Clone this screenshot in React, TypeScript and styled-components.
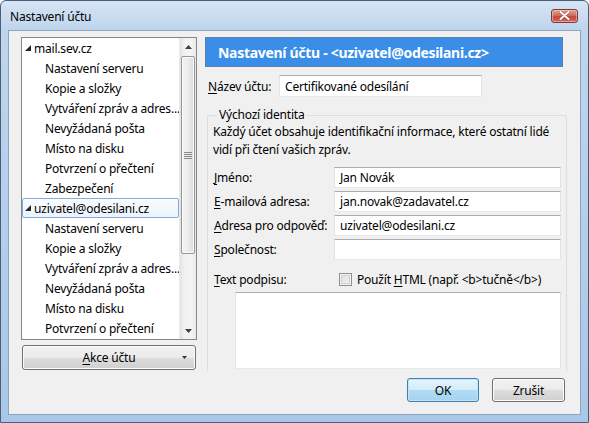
import React from 'react';
import styled, { createGlobalStyle } from 'styled-components';

const Global = createGlobalStyle`
  html, body { margin: 0; padding: 0; background: #ffffff; }
  body {
    font-family: "Noto Sans", "Open Sans", sans-serif;
    font-size: 12px;
    color: #000;
  }
  * { box-sizing: border-box; }
`;

const Window = styled.div`
  width: 589px;
  height: 423px;
  border: 1px solid #4b5e77;
  border-radius: 6px 6px 0 0;
  background: linear-gradient(180deg, #d6e5f5 0px, #bfd5ed 28px, #b3cdea 60%, #a9c7e7 100%);
  padding: 0 7px 7px;
  display: flex;
  flex-direction: column;
`;

const TitleBar = styled.div`
  height: 29px;
  display: flex;
  align-items: center;
  padding: 2px 3px 0 2px;
`;

const Title = styled.div`
  flex: 1;
  font-size: 12px;
  letter-spacing: -0.2px;
  color: #000;
`;

const CloseBtn = styled.div`
  width: 27px;
  height: 14px;
  border-radius: 3px;
  border: 1px solid #7a3b35;
  background: linear-gradient(180deg, #e4a190 0%, #d0705f 45%, #c5473a 55%, #d36b58 100%);
  box-shadow: inset 0 0 0 1px rgba(255, 220, 210, 0.5);
  display: flex;
  align-items: center;
  justify-content: center;
  margin-top: -2px;
`;

const Client = styled.div`
  flex: 1;
  background: #f0f0f0;
  border: 1px solid #8ea4be;
  padding: 6px 12px 12px;
  display: flex;
  flex-direction: column;
`;

const Main = styled.div`
  height: 335px;
  display: flex;
  gap: 8px;
`;

const LeftCol = styled.div`
  width: 176px;
  display: flex;
  flex-direction: column;
  gap: 5px;
`;

const Tree = styled.div`
  height: 303px;
  border: 1px solid #828790;
  background: #fff;
  display: flex;
`;

const TreeList = styled.div`
  flex: 1;
  overflow: hidden;
`;

const TreeRow = styled.div<{ $level: number; $selected?: boolean }>`
  height: 20px;
  display: flex;
  align-items: center;
  gap: 3px;
  padding-left: ${(p) => (p.$level === 0 ? 2 : 22)}px;
  white-space: nowrap;
  letter-spacing: -0.2px;
  border: 1px solid ${(p) => (p.$selected ? '#84acdd' : 'transparent')};
  border-radius: 2px;
  background: ${(p) => (p.$selected ? 'linear-gradient(180deg, #fafcfe 0%, #ebf3fd 100%)' : 'transparent')};
`;

const Scrollbar = styled.div`
  width: 17px;
  display: flex;
  flex-direction: column;
  background: linear-gradient(90deg, #e3e3e3 0%, #f2f2f2 30%, #f4f4f4 70%, #e8e8e8 100%);
  border-left: 1px solid #e9e9e9;
`;

const ScrollArrow = styled.div`
  height: 17px;
  display: flex;
  align-items: center;
  justify-content: center;
`;

const Track = styled.div`
  flex: 1;
  padding: 1px 1px 0;
`;

const Thumb = styled.div`
  height: 198px;
  border: 1px solid #979797;
  border-radius: 2px;
  background: linear-gradient(90deg, #f4f4f4 0%, #ececec 50%, #dcdcdc 100%);
  box-shadow: inset 0 0 0 1px #fbfbfb;
  display: flex;
  align-items: center;
  justify-content: center;
`;

const DropButton = styled.div`
  height: 25px;
  margin: 0 1px;
  border: 1px solid #707070;
  border-radius: 3px;
  background: linear-gradient(180deg, #f2f2f2 0%, #ebebeb 50%, #dddddd 51%, #cfcfcf 100%);
  box-shadow: inset 0 0 0 1px #fcfcfc;
  display: flex;
  align-items: center;
  justify-content: center;
  position: relative;
  letter-spacing: -0.2px;
`;

const DropArrow = styled.span`
  position: absolute;
  right: 8px;
  top: 10px;
  display: flex;
`;

const RightCol = styled.div`
  width: 362px;
  display: flex;
  flex-direction: column;
`;

const Header = styled.div`
  width: 358px;
  height: 30px;
  background: #3a8ee8;
  border: 1px solid #5e84ad;
  color: #fff;
  font-weight: 700;
  font-size: 14px;
  letter-spacing: -0.3px;
  display: flex;
  align-items: center;
  padding-left: 12px;
  white-space: nowrap;
`;

const NameRow = styled.div`
  margin-top: 8px;
  height: 22px;
  display: flex;
  align-items: center;
  padding-left: 3px;
`;

const NameLabel = styled.label`
  width: 71px;
  letter-spacing: -0.2px;
`;

const TextBox = styled.div<{ $w: number; $h?: number }>`
  width: ${(p) => p.$w}px;
  height: ${(p) => p.$h ?? 21}px;
  background: #fff;
  border: 1px solid #e2e3ea;
  border-top-color: #abadb3;
  border-bottom-color: #e3e9ef;
  padding-left: 5px;
  display: flex;
  align-items: center;
  letter-spacing: -0.2px;
  white-space: nowrap;
`;

const Group = styled.fieldset`
  margin: 10px 0 0 2px;
  width: 360px;
  border: 1px solid #d5dfe5;
  border-bottom: none;
  border-radius: 3px 3px 0 0;
  padding: 0 5px 2px 6px;
  min-width: 0;
`;

const Legend = styled.legend`
  padding: 0 2px;
  margin-left: 3px;
  line-height: 16px;
  letter-spacing: -0.2px;
`;

const Desc = styled.div`
  line-height: 18px;
  margin-left: -1px;
  letter-spacing: -0.2px;
  white-space: nowrap;
`;

const Fields = styled.div`
  margin-top: 8px;
  display: grid;
  grid-template-columns: 120px 227px;
  grid-auto-rows: 21px;
  row-gap: 3px;
  align-items: center;
`;

const FieldLabel = styled.label`
  letter-spacing: -0.2px;
  white-space: nowrap;
`;

const SigRow = styled.div`
  margin-top: 9px;
  height: 20px;
  display: flex;
  align-items: center;
`;

const SigLabel = styled.label`
  width: 125px;
  letter-spacing: -0.2px;
`;

const CheckBox = styled.div`
  width: 13px;
  height: 13px;
  border: 1px solid #8e8f8f;
  background: linear-gradient(135deg, #dcdcdc 0%, #f5f5f5 100%);
  box-shadow: inset 0 0 0 1px #f4f4f4, inset 0 0 0 2px #d2d2d2;
  margin-right: 5px;
`;

const CheckText = styled.span`
  letter-spacing: -0.2px;
  white-space: nowrap;
`;

const SigArea = styled.div`
  margin: 3px 0 0 21px;
  width: 326px;
  height: 77px;
  background: #fff;
  border: 1px solid #e2e3ea;
  border-top-color: #abadb3;
  border-bottom-color: #e3e9ef;
`;

const Footer = styled.div`
  margin-top: 6px;
  height: 24px;
  display: flex;
  justify-content: flex-end;
  gap: 13px;
  padding-right: 3px;
`;

const Button = styled.div<{ $default?: boolean }>`
  width: ${(p) => (p.$default ? 72 : 73)}px;
  height: 24px;
  border-radius: 3px;
  border: 1px solid ${(p) => (p.$default ? '#3c7fb1' : '#707070')};
  background: ${(p) =>
    p.$default
      ? 'linear-gradient(180deg, #e5f4fc 0%, #d3ecfa 50%, #b2dcf5 51%, #a3d2f0 100%)'
      : 'linear-gradient(180deg, #f2f2f2 0%, #ebebeb 50%, #dddddd 51%, #cfcfcf 100%)'};
  box-shadow: inset 0 0 0 1px ${(p) => (p.$default ? '#c4e5f6' : '#fcfcfc')};
  display: flex;
  align-items: center;
  justify-content: center;
  letter-spacing: -0.2px;
`;

const Key = styled.u`
  text-decoration: underline;
  text-underline-offset: 2px;
`;

const Expander = () => (
  <svg width="6" height="6" viewBox="0 0 6 6">
    <polygon points="6,0 6,6 0,6" fill="#262626" />
  </svg>
);

const ArrowUp = () => (
  <svg width="7" height="4" viewBox="0 0 7 4">
    <polygon points="3.5,0 7,4 0,4" fill="#404040" />
  </svg>
);

const ArrowDown = () => (
  <svg width="7" height="4" viewBox="0 0 7 4">
    <polygon points="0,0 7,0 3.5,4" fill="#404040" />
  </svg>
);

const Grip = () => (
  <svg width="8" height="7" viewBox="0 0 8 7">
    <rect x="0" y="0" width="8" height="1" fill="#8a8a8a" />
    <rect x="0" y="2" width="8" height="1" fill="#8a8a8a" />
    <rect x="0" y="4" width="8" height="1" fill="#8a8a8a" />
    <rect x="0" y="6" width="8" height="1" fill="#8a8a8a" />
  </svg>
);

const CloseX = () => (
  <svg width="11" height="9" viewBox="0 0 11 9">
    <path d="M1.5 1 L9.5 8 M9.5 1 L1.5 8" stroke="#5a2a25" strokeWidth="3" strokeLinecap="round" opacity="0.5" />
    <path d="M1.5 1 L9.5 8 M9.5 1 L1.5 8" stroke="#ffffff" strokeWidth="2" strokeLinecap="round" />
  </svg>
);

const subItems = [
  'Nastavení serveru',
  'Kopie a složky',
  'Vytváření zpráv a adres...',
  'Nevyžádaná pošta',
  'Místo na disku',
  'Potvrzení o přečtení',
  'Zabezpečení',
];

const accounts = [
  { name: 'mail.sev.cz', selected: false },
  { name: 'uzivatel@odesilani.cz', selected: true },
];

const identity = [
  { label: <><Key>J</Key>méno:</>, value: 'Jan Novák' },
  { label: <><Key>E</Key>-mailová adresa:</>, value: 'jan.novak@zadavatel.cz' },
  { label: <><Key>A</Key>dresa pro odpověď:</>, value: 'uzivatel@odesilani.cz' },
  { label: <><Key>S</Key>polečnost:</>, value: '' },
];

export default function App() {
  return (
    <>
      <Global />
      <Window>
        <TitleBar>
          <Title>Nastavení účtu</Title>
          <CloseBtn>
            <CloseX />
          </CloseBtn>
        </TitleBar>
        <Client>
          <Main>
            <LeftCol>
              <Tree>
                <TreeList>
                  {accounts.map((a) => (
                    <React.Fragment key={a.name}>
                      <TreeRow $level={0} $selected={a.selected}>
                        <Expander />
                        <span>{a.name}</span>
                      </TreeRow>
                      {subItems.map((s) => (
                        <TreeRow key={a.name + s} $level={1}>
                          {s}
                        </TreeRow>
                      ))}
                    </React.Fragment>
                  ))}
                </TreeList>
                <Scrollbar>
                  <ScrollArrow>
                    <ArrowUp />
                  </ScrollArrow>
                  <Track>
                    <Thumb>
                      <Grip />
                    </Thumb>
                  </Track>
                  <ScrollArrow>
                    <ArrowDown />
                  </ScrollArrow>
                </Scrollbar>
              </Tree>
              <DropButton>
                <span>
                  <Key>A</Key>kce účtu
                </span>
                <DropArrow>
                  <svg width="5" height="3" viewBox="0 0 5 3">
                    <polygon points="0,0 5,0 2.5,3" fill="#333" />
                  </svg>
                </DropArrow>
              </DropButton>
            </LeftCol>
            <RightCol>
              <Header>Nastavení účtu - &lt;uzivatel@odesilani.cz&gt;</Header>
              <NameRow>
                <NameLabel>
                  <Key>N</Key>ázev účtu:
                </NameLabel>
                <TextBox $w={203} $h={22}>Certifikované odesílání</TextBox>
              </NameRow>
              <Group>
                <Legend>Výchozí identita</Legend>
                <Desc>
                  Každý účet obsahuje identifikační informace, které ostatní lidé
                  <br />
                  vidí při čtení vašich zpráv.
                </Desc>
                <Fields>
                  {identity.map((f, i) => (
                    <React.Fragment key={i}>
                      <FieldLabel>{f.label}</FieldLabel>
                      <TextBox $w={227}>{f.value}</TextBox>
                    </React.Fragment>
                  ))}
                </Fields>
                <SigRow>
                  <SigLabel>
                    <Key>T</Key>ext podpisu:
                  </SigLabel>
                  <CheckBox />
                  <CheckText>
                    Použít <Key>H</Key>TML (např. &lt;b&gt;tučně&lt;/b&gt;)
                  </CheckText>
                </SigRow>
                <SigArea />
              </Group>
            </RightCol>
          </Main>
          <Footer>
            <Button $default>OK</Button>
            <Button>Zrušit</Button>
          </Footer>
        </Client>
      </Window>
    </>
  );
}
